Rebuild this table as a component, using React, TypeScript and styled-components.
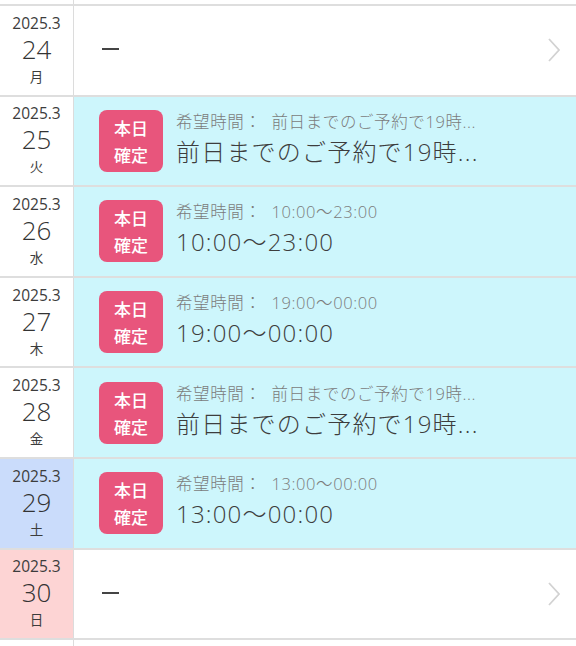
import React from "react";
import styled, { createGlobalStyle } from "styled-components";

const Global = createGlobalStyle`
  html, body { margin: 0; padding: 0; background: #fff; }
  body {
    font-family: "Open Sans", "Noto Sans CJK JP", sans-serif;
    color: #3a3a3a;
    overflow: hidden;
  }
`;

const List = styled.div`
  display: flex;
  flex-direction: column;
  width: 576px;
  height: 646px;
  overflow: hidden;
`;

type Tone = "plain" | "sat" | "sun";

const Row = styled.div<{ $confirmed?: boolean; $stub?: boolean }>`
  display: flex;
  height: ${(p) => (p.$stub ? "6px" : "90.6px")};
  flex: none;
  box-sizing: border-box;
  border-bottom: 2px solid #dedede;
  background: ${(p) => (p.$confirmed ? "#cdf6fc" : "#fff")};
`;

const DateCell = styled.div<{ $tone: Tone }>`
  width: 74px;
  flex: none;
  box-sizing: border-box;
  border-right: 1.5px solid #dcdcdc;
  display: flex;
  flex-direction: column;
  align-items: center;
  justify-content: center;
  padding-bottom: 3px;
  font-weight: 400;
  background: ${(p) =>
    p.$tone === "sat" ? "#cadcfb" : p.$tone === "sun" ? "#fdd4d4" : "#fff"};
`;

const Year = styled.div`
  font-size: 15.5px;
  line-height: 22px;
  color: #3c3c3c;
`;

const Day = styled.div`
  font-size: 26px;
  line-height: 34px;
  font-weight: 300;
  color: #333;
  margin-top: -2px;
`;

const Week = styled.div`
  font-family: "Noto Sans CJK JP", sans-serif;
  font-size: 13.5px;
  line-height: 20px;
  color: #3c3c3c;
`;

const Content = styled.div`
  flex: 1;
  display: flex;
  align-items: center;
  padding-left: 25px;
  padding-right: 16px;
  position: relative;
`;

const Dash = styled.div`
  width: 17px;
  height: 2px;
  background: #444;
  margin-left: 3px;
  margin-top: -2px;
`;

const Chevron = styled.svg`
  position: absolute;
  right: 15px;
  top: 50%;
  margin-top: -13px;
`;

const Badge = styled.div`
  width: 64px;
  height: 62px;
  border-radius: 8px;
  background: #e8557c;
  color: #fff;
  display: flex;
  flex-direction: column;
  align-items: center;
  justify-content: center;
  font-family: "Noto Sans CJK JP", sans-serif;
  font-size: 17px;
  line-height: 27px;
  font-weight: 500;
  flex: none;
`;

const Texts = styled.div`
  margin-left: 13px;
  display: flex;
  flex-direction: column;
  margin-top: -7px;
  font-weight: 300;
`;

const Label = styled.div`
  font-size: 16.5px;
  line-height: 27px;
  color: #7b7b7b;
  white-space: nowrap;
  letter-spacing: 0.6px;
`;

const Gap = styled.span`
  display: inline-block;
  width: 10px;
`;

const Main = styled.div`
  font-size: 24px;
  line-height: 30px;
  margin-top: 2px;
  color: #3d3d3d;
  white-space: nowrap;
  letter-spacing: 1.2px;
`;

type Entry = {
  day: string;
  week: string;
  tone: Tone;
  time?: string;
};

const entries: Entry[] = [
  { day: "24", week: "月", tone: "plain" },
  { day: "25", week: "火", tone: "plain", time: "前日までのご予約で19時..." },
  { day: "26", week: "水", tone: "plain", time: "10:00〜23:00" },
  { day: "27", week: "木", tone: "plain", time: "19:00〜00:00" },
  { day: "28", week: "金", tone: "plain", time: "前日までのご予約で19時..." },
  { day: "29", week: "土", tone: "sat", time: "13:00〜00:00" },
  { day: "30", week: "日", tone: "sun" },
];

export default function App() {
  return (
    <>
      <Global />
      <List>
        <Row $stub>
          <DateCell $tone="plain" />
          <Content />
        </Row>
        {entries.map((e) => (
          <Row key={e.day} $confirmed={!!e.time}>
            <DateCell $tone={e.tone}>
              <Year>2025.3</Year>
              <Day>{e.day}</Day>
              <Week>{e.week}</Week>
            </DateCell>
            <Content>
              {e.time ? (
                <>
                  <Badge>
                    <span>本日</span>
                    <span>確定</span>
                  </Badge>
                  <Texts>
                    <Label>
                      希望時間：<Gap />
                      {e.time}
                    </Label>
                    <Main>{e.time}</Main>
                  </Texts>
                </>
              ) : (
                <>
                  <Dash />
                  <Chevron width="14" height="26" viewBox="0 0 14 26">
                    <path
                      d="M2 2 L12 13 L2 24"
                      fill="none"
                      stroke="#d2d2d2"
                      strokeWidth="1.8"
                    />
                  </Chevron>
                </>
              )}
            </Content>
          </Row>
        ))}
        <Row>
          <DateCell $tone="plain" />
          <Content />
        </Row>
      </List>
    </>
  );
}
